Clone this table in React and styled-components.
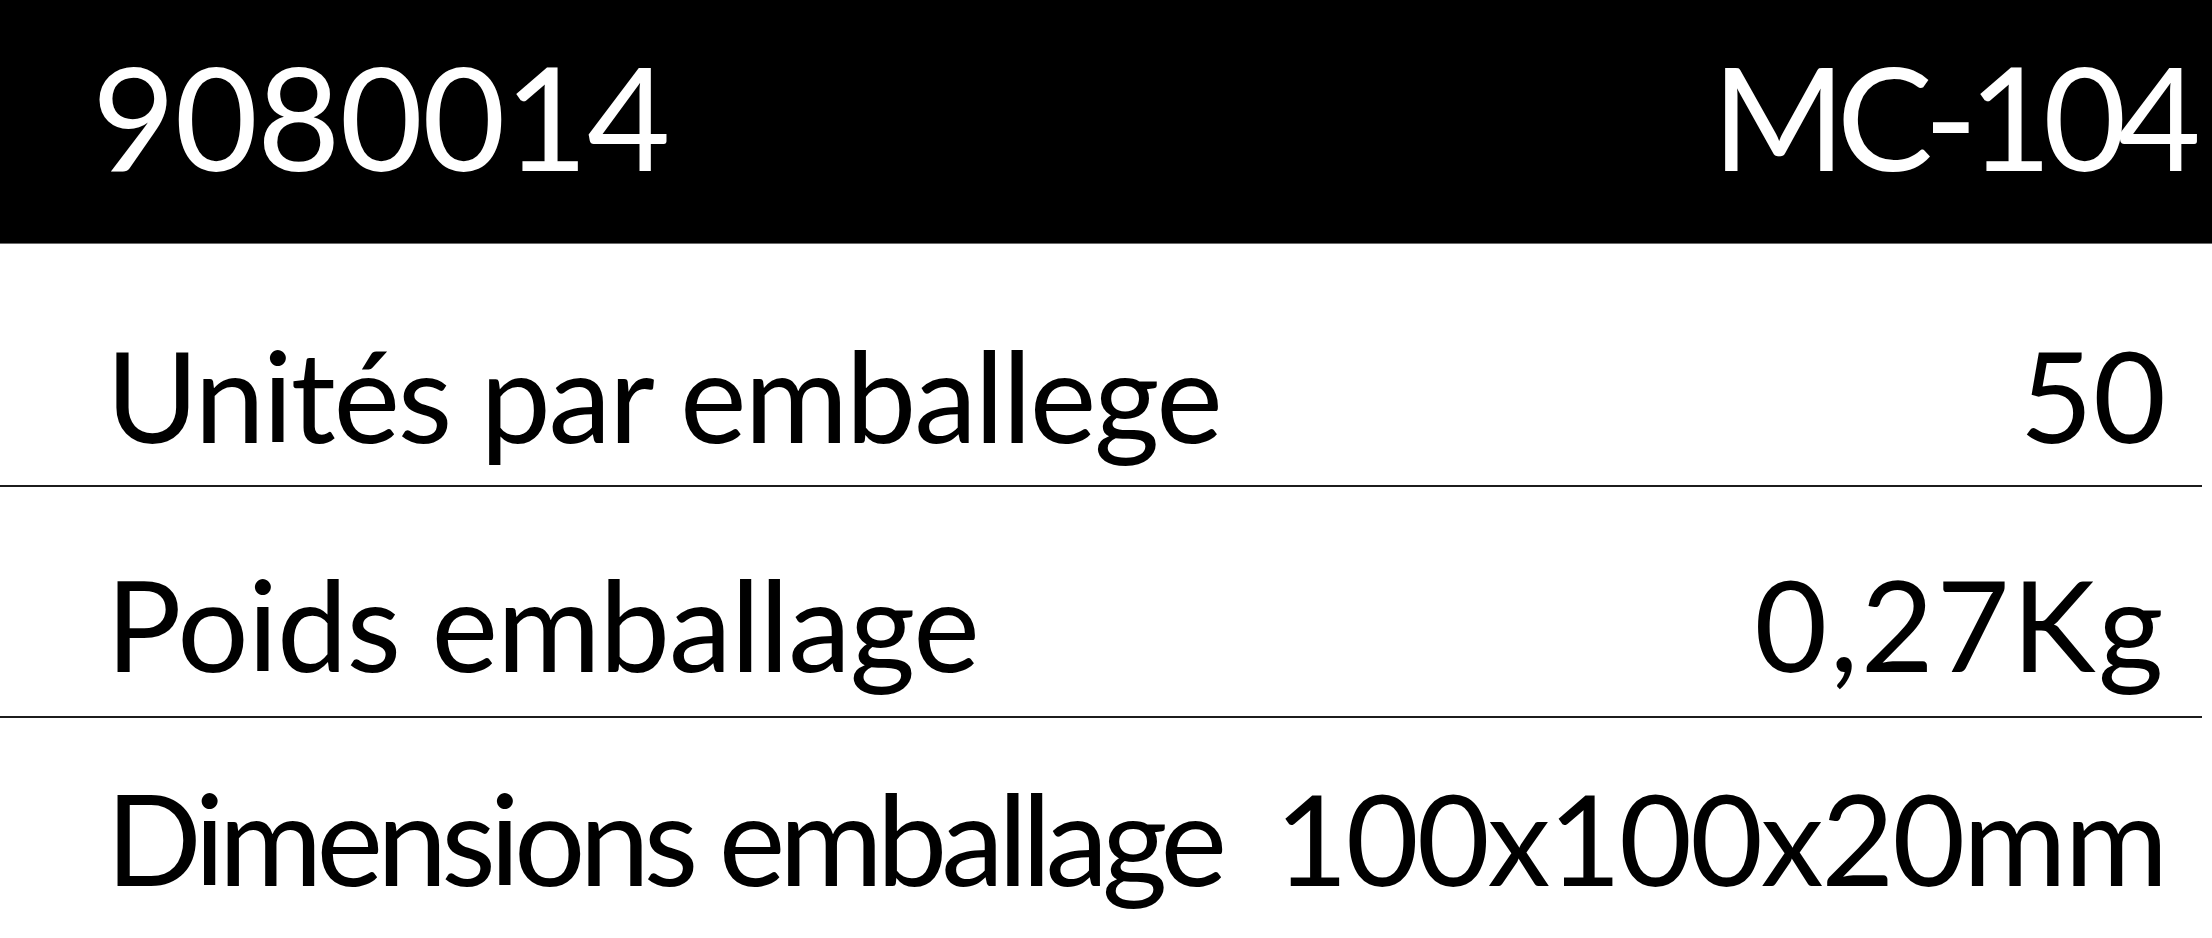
import React from "react";
import styled, { createGlobalStyle } from "styled-components";

const GlobalStyle = createGlobalStyle`
  html, body {
    margin: 0;
    padding: 0;
    background: #fff;
  }
  body {
    font-family: Lato, "Open Sans", "Liberation Sans", sans-serif;
    color: #000;
    overflow: hidden;
  }
`;

const Sheet = styled.div`
  width: 2212px;
  height: 938px;
  background: #fff;
  overflow: hidden;
`;

const Header = styled.header`
  height: 244px;
  background: #000;
  border-bottom: 1px solid #6b6b6b;
  box-sizing: border-box;
  display: flex;
  align-items: center;
  justify-content: space-between;
  padding: 0 20px 12px 92px;
  color: #fff;
  font-size: 144px;
  font-weight: 400;
  line-height: 1;
  white-space: nowrap;
`;

const HeaderText = styled.span`
  letter-spacing: ${(p) => p.$track}px;
`;

const Table = styled.div`
  padding-right: 10px;
`;

const Row = styled.div`
  display: flex;
  justify-content: space-between;
  align-items: baseline;
  height: ${(p) => p.$h}px;
  box-sizing: border-box;
  padding: ${(p) => p.$pt}px 36px 0 106px;
  border-bottom: ${(p) => (p.$last ? "none" : "2px solid #1c1c1c")};
  font-size: 126px;
  line-height: 1;
  white-space: nowrap;
`;

const Label = styled.span`
  letter-spacing: ${(p) => p.$track}px;
`;

const Value = styled.span`
  letter-spacing: ${(p) => p.$track}px;
`;

const rows = [
  { label: "Unités par emballege", value: "50", pt: 88, h: 243, lt: -2.2, vt: 0 },
  { label: "Poids emballage", value: "0,27Kg", pt: 74, h: 231, lt: -1, vt: 2.5 },
  { label: "Dimensions emballage", value: "100x100x20mm", pt: 57, h: 220, lt: -6, vt: -2.2 },
];

export default function App() {
  return (
    <Sheet>
      <GlobalStyle />
      <Header>
        <HeaderText $track={-1}>9080014</HeaderText>
        <HeaderText $track={-9}>MC-104</HeaderText>
      </Header>
      <Table>
        {rows.map((r, i) => (
          <Row key={r.label} $pt={r.pt} $h={r.h} $last={i === rows.length - 1}>
            <Label $track={r.lt}>{r.label}</Label>
            <Value $track={r.vt}>{r.value}</Value>
          </Row>
        ))}
      </Table>
    </Sheet>
  );
}
